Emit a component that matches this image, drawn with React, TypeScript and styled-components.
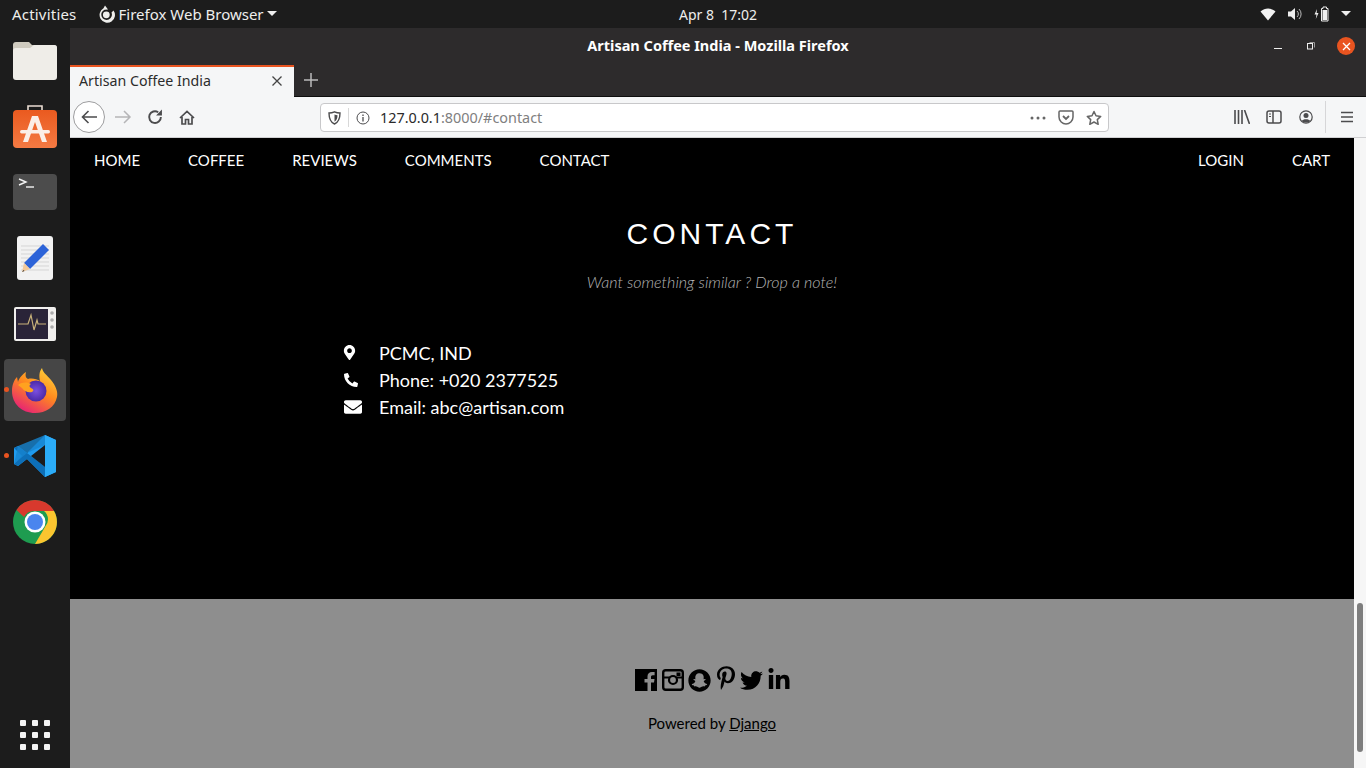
import React from "react";
import styled, { createGlobalStyle } from "styled-components";
import { FaSnapchat, FaPinterestP, FaTwitter, FaLinkedinIn, FaMapMarkerAlt, FaPhoneAlt, FaEnvelope } from "react-icons/fa";

const Global = createGlobalStyle`
  html, body { margin: 0; padding: 0; height: 100%; overflow: hidden; background: #000; }
  #root { height: 768px; }
`;
const Screen = styled.div`
  width: 1366px; height: 768px; display: flex; flex-direction: column; overflow: hidden;
  font-family: "Noto Sans", "Open Sans", sans-serif;
`;
const TopBar = styled.header`
  height: 28px; flex: none; background: #1c1c1c; color: #eeeeec; display: grid;
  grid-template-columns: 1fr auto 1fr; align-items: center; font-size: 15px; padding: 0 15px 0 12px;
`;
const TopLeft = styled.div`display: flex; align-items: center;`;
const Activities = styled.span`letter-spacing: 0.2px;`;
const AppMenu = styled.div`display: flex; align-items: center; gap: 4px; margin-left: 20px;`;
const MenuCaret = styled.svg`display: block; margin-left: -1px;`;
const Clock = styled.div`font-size: 14px; margin-left: 73px;`;
const TopRight = styled.div`display: flex; align-items: center; justify-content: flex-end; gap: 11px;`;
const Body = styled.div`flex: 1; display: flex; min-height: 0;`;
const Dock = styled.nav`
  width: 70px; flex: none; background: #1c1c1c; display: flex; flex-direction: column; align-items: center; padding-top: 1px;
`;
const DockSlot = styled.div<{ $active?: boolean; $running?: boolean }>`
  position: relative; width: 62px; height: 62px; margin-bottom: 4px; border-radius: 4px; display: flex; align-items: center; justify-content: center;
  background: ${(p) => (p.$active ? "#464646" : "transparent")};
  &::before {
    content: ""; display: ${(p) => (p.$running ? "block" : "none")}; position: absolute; left: 0; top: 28px;
    width: 5px; height: 5px; border-radius: 50%; background: #e95420;
  }
`;
const AppGrid = styled.div`
  margin-top: auto; margin-bottom: 18px; display: grid; grid-template-columns: repeat(3, 6px); gap: 6px;
`;
const AppDot = styled.span`width: 6px; height: 6px; border-radius: 1px; background: #f4f4f4;`;
const Window = styled.div`flex: 1; min-width: 0; display: flex; flex-direction: column;`;
const TitleBar = styled.div`
  height: 37px; flex: none; background: #2d2b2c; color: #fff; position: relative; display: flex; align-items: center; justify-content: center;
  font-size: 14.5px; font-weight: 700; padding-bottom: 4px; box-sizing: border-box;
`;
const WindowControls = styled.div`position: absolute; right: 11px; top: 9px; display: flex; align-items: center;`;
const MinButton = styled.svg`display: block; margin-right: 25px;`;
const RestoreButton = styled.svg`display: block; margin-right: 22px;`;
const CloseDot = styled.span`
  width: 18px; height: 18px; border-radius: 50%; background: #e95420; display: flex; align-items: center; justify-content: center;
`;
const TabStrip = styled.div`height: 32px; flex: none; background: #2d2b2c; display: flex; align-items: stretch;`;
const Tab = styled.div`
  width: 224px; background: #f5f6f7; border-top: 2px solid #e95420; box-sizing: border-box; display: flex; align-items: center;
  justify-content: space-between; padding: 0 11px 3px 9px; font-size: 14.2px; color: #2c2c2c;
`;
const TabRest = styled.div`flex: 1; display: flex; border-bottom: 1px solid #0e0e0e;`;
const NewTab = styled.div`width: 34px; display: flex; align-items: center; justify-content: center; padding-bottom: 1px;`;
const Toolbar = styled.div`
  height: 40px; flex: none; background: #f5f6f7; border-bottom: 1px solid #d0d0d2; display: flex; align-items: center; position: relative; box-sizing: content-box;
`;
const BackCircle = styled.div`
  width: 32px; height: 32px; margin: 0 2px 0 3px; border-radius: 50%; background: #fff; border: 1px solid #9d9d9f; box-sizing: border-box;
  display: flex; align-items: center; justify-content: center;
`;
const NavIcon = styled.div`width: 32px; display: flex; align-items: center; justify-content: center;`;
const UrlBar = styled.div`
  position: absolute; left: 250px; top: 6px; width: 789px; height: 29px; box-sizing: border-box; background: #fff; border: 1px solid #c8c8ca; border-radius: 4px;
  display: flex; align-items: center; font-size: 14.4px; padding: 0 6px 0 7px;
`;
const Separator = styled.span`width: 1px; height: 19px; background: #d8d8d8; margin: 0 7px 0 7px;`;
const UrlHost = styled.span`color: #2a2a2a; margin-left: 10px;`;
const UrlRest = styled.span`color: #808080;`;
const UrlActions = styled.div`margin-left: auto; display: flex; align-items: center; gap: 12px;`;
const ToolRight = styled.div`position: absolute; right: 3px; top: 0; height: 40px; display: flex; align-items: center;`;
const ToolBtn = styled.div`width: 32px; display: flex; align-items: center; justify-content: center;`;
const ToolSep = styled.span`width: 1px; height: 32px; background: #d6d6d8; margin: 0 5px 0 3px;`;
const PageRow = styled.div`flex: 1; min-height: 0; display: flex;`;
const Page = styled.main`
  flex: 1; min-width: 0; background: #000; color: #fff; display: flex; flex-direction: column; font-family: Lato, sans-serif;
`;
const SiteNav = styled.nav`height: 43px; flex: none; display: flex; align-items: center; font-size: 15px;`;
const NavLink = styled.a`padding: 0 24px; color: #fff; white-space: nowrap;`;
const NavSpacer = styled.div`flex: 1;`;
const Contact = styled.section`flex: 1; display: flex; flex-direction: column; align-items: center; padding-top: 34px;`;
const Heading = styled.h2`
  margin: 0; font-weight: 400; font-size: 30px; line-height: 38px; letter-spacing: 4px; text-align: center; font-family: "Liberation Sans", Arial, sans-serif;
`;
const Sub = styled.p`margin: 19px 0 0; font-size: 16.1px; line-height: 20px; font-style: italic; font-weight: 300; color: #b4b4b4;`;
const InfoList = styled.ul`
  list-style: none; margin: 47px 0 0; padding: 0 0 0 274px; align-self: stretch; font-size: 18px; display: flex; flex-direction: column;
`;
const InfoRow = styled.li`height: 27px; display: flex; align-items: center;`;
const InfoIcon = styled.span`width: 35px; display: flex; align-items: center;`;
const Marker = styled(FaMapMarkerAlt)`margin-left: -2px; margin-right: 2px;`;
const Footer = styled.footer`
  height: 169px; flex: none; background: #8e8e8e; color: #000; display: flex; flex-direction: column; align-items: center; padding-top: 67px; box-sizing: border-box;
`;
const Socials = styled.div`display: flex; align-items: center; height: 28px; padding-left: 2px;`;
const SocialItem = styled.span<{ $gap?: number; $lift?: number }>`
  display: flex; margin-left: ${(p) => p.$gap ?? 0}px; margin-top: ${(p) => -(p.$lift ?? 0)}px;
`;
const PoweredBy = styled.p`margin: 19px 0 0; font-size: 15px; line-height: 20px; a { color: #000; text-decoration: underline; }`;
const ScrollTrack = styled.div`width: 12px; flex: none; background: #f6f6f6; display: flex; flex-direction: column; justify-content: flex-end; align-items: center; padding-bottom: 16px; box-sizing: border-box;`;
const ScrollThumb = styled.div`width: 6px; height: 149px; background: #7e7e7e; border-radius: 3px;`;

const Ico = styled.svg`display: block; flex: none;`;
const grey = "#4c4c4e";

export default function App() {
  return (
    <Screen>
      <Global />
      <TopBar>
        <TopLeft>
          <Activities>Activities</Activities>
          <AppMenu>
            <Ico width="18" height="18" viewBox="0 0 18 18">
              <path d="M8 0.500 L6.500 3.300 A7.700 7.700 0 1 0 16.500 5.500 L14.500 7.500 A5.300 5.300 0 1 1 7.500 4.700 L11 4.500 Z" fill="#eeeeec" />
              <circle cx="9.300" cy="9.800" r="3.400" fill="#eeeeec" />
            </Ico>
            <span>Firefox Web Browser</span>
            <MenuCaret width="10" height="6" viewBox="0 0 10 6"><path d="M0 0h10L5 5z" fill="#eee" /></MenuCaret>
          </AppMenu>
        </TopLeft>
        <Clock>Apr 8&nbsp;&nbsp;17:02</Clock>
        <TopRight>
          <Ico width="16" height="13" viewBox="0 0 16 13"><path d="M0.500 3.500C5 -0.500 11 -0.500 15.500 3.500L8 12.500Z" fill="#f2f2f2" /></Ico>
          <Ico width="16" height="14" viewBox="0 0 16 14"><path d="M1 4.500h3L8 1v12L4 9.500H1z" fill="#eee" /><path d="M10 4a4 4 0 0 1 0 6M12 2a7 7 0 0 1 0 10" stroke="#bbb" strokeWidth="1" fill="none" /></Ico>
          <Ico width="16" height="16" viewBox="0 0 16 16"><path d="M3 3 0.500 8.500H2.500L1.800 13 4.500 7H2.600z" fill="#eee" /><path d="M7.500 2.500h1.500V1h3.500v1.500H14V15H7.500z" fill="none" stroke="#eee" strokeWidth="1" /><rect x="8.500" y="4" width="4.500" height="10" fill="#eee" /></Ico>
          <Ico width="10" height="6" viewBox="0 0 10 6"><path d="M0 0h10L5 5z" fill="#eee" /></Ico>
        </TopRight>
      </TopBar>
      <Body>
        <Dock>
          <DockSlot>
            <Ico width="46" height="42" viewBox="0 0 46 42">
              <path d="M1 6a3 3 0 0 1 3-3h13l3 3h22a3 3 0 0 1 3 3v6H1z" fill="#cfcbbf" />
              <path d="M1 12q0-3 3-3h14l4-3h20q3 0 3 3v29q0 3-3 3H4q-3 0-3-3z" fill="#efede8" />
            </Ico>
          </DockSlot>
          <DockSlot>
            <Ico width="46" height="44" viewBox="0 0 46 44">
              <defs><linearGradient id="o" x1="0" y1="0" x2="0" y2="1"><stop offset="0" stopColor="#ea5a1f" /><stop offset="1" stopColor="#f47a43" /></linearGradient></defs>
              <path d="M16 7V2h14v5" fill="none" stroke="#eadcd2" strokeWidth="1.600" />
              <rect x="1" y="6" width="44" height="38" rx="4" fill="url(#o)" />
              <path d="M20 12h6l9 26h-5l-7-20-7 20h-5z" fill="#fbeee6" />
              <rect x="8" y="26" width="30" height="3.500" rx="1.700" fill="#fbeee6" />
            </Ico>
          </DockSlot>
          <DockSlot>
            <Ico width="44" height="36" viewBox="0 0 44 36">
              <rect width="44" height="36" rx="4" fill="#4c4c4c" />
              <path d="M6 5l7 3-7 3" stroke="#f4f4f4" strokeWidth="1.400" fill="none" />
              <path d="M13 13h8" stroke="#f4f4f4" strokeWidth="1.400" />
            </Ico>
          </DockSlot>
          <DockSlot>
            <Ico width="38" height="46" viewBox="0 0 38 46">
              <rect x="1" y="1" width="36" height="44" rx="3" fill="#f2f2f2" />
              <path d="M5 11h28M5 15h28M5 19h28M5 23h28M5 27h28M5 31h28M5 35h28" stroke="#d5d5d5" strokeWidth="1" />
              <path d="M27 9l6 6-19 19-6-6z" fill="#2c63d8" />
              <path d="M8 28l6 6-8 3z" fill="#f0c89a" />
              <path d="M7.500 35l-1.500 2 2.500-1z" fill="#333" />
            </Ico>
          </DockSlot>
          <DockSlot>
            <Ico width="42" height="34" viewBox="0 0 42 34">
              <rect width="42" height="34" rx="2" fill="#f0efed" />
              <rect x="2" y="2" width="32" height="30" fill="#2a2438" />
              <path d="M4 17h10l3-9 3 15 3-10 1 4h8" stroke="#c9b27a" strokeWidth="1.200" fill="none" />
              <circle cx="38" cy="6" r="1.800" fill="#aaa" /><circle cx="38" cy="13" r="1.800" fill="#aaa" /><circle cx="38" cy="20" r="1.800" fill="#aaa" />
            </Ico>
          </DockSlot>
          <DockSlot $active $running>
            <Ico width="46" height="46" viewBox="0 0 46 46">
              <defs>
                <linearGradient id="ff" x1="0.800" y1="0" x2="0.200" y2="1"><stop offset="0" stopColor="#ffd43a" /><stop offset="0.450" stopColor="#ff8a1e" /><stop offset="1" stopColor="#e5197c" /></linearGradient>
                <radialGradient id="fg"><stop offset="0" stopColor="#7b4fe0" /><stop offset="1" stopColor="#4a2aa8" /></radialGradient>
              </defs>
              <path d="M30 1c1 5 5 7 9 12 5 6 7 12 6 17-2 10-11 16-22 16C10 46 0 37 0 24 0 18 2 13 5 10l1 5c1-4 5-8 8-10-1 4 0 6 2 7 4-1 9 0 12 2-1-5-1-9 2-13z" fill="url(#ff)" />
              <circle cx="24" cy="24" r="10.500" fill="url(#fg)" />
              <path d="M6 18c4-3 9-3 13-1-2 1-2 3 0 4 3 1 3 3 1 4-4 1-8-1-10-4z" fill="#ffa21f" />
            </Ico>
          </DockSlot>
          <DockSlot $running>
            <Ico width="44" height="44" viewBox="0 0 44 44">
              <path d="M32 1 14 19 5 12 1 14v16l4 2 9-7 18 18 11-5V6z" fill="#1f9cf0" />
              <path d="M32 1v42l11-5V6z" fill="#2bacf8" />
              <path d="M1 14l4-2 27 21v10L14 25 5 32l-4-2 8-8z" fill="#0d6fb8" />
              <path d="M5 12l27-11v10L14 19 1 30z" fill="#1785cf" opacity="0.800" />
              <path d="M32 11 18 22l14 11z" fill="#1c1c1c" />
            </Ico>
          </DockSlot>
          <DockSlot>
            <Ico width="44" height="44" viewBox="0 0 44 44">
              <circle cx="22" cy="22" r="22" fill="#1e9c50" />
              <path d="M22 0a22 22 0 0 1 19 11H22a11 11 0 0 0-11 6L3.500 10A22 22 0 0 1 22 0z" fill="#d8392d" />
              <path d="M41 11a22 22 0 0 1-19 33l10-17a11 11 0 0 0-1-16z" fill="#fbc52f" />
              <circle cx="22" cy="22" r="10.500" fill="#fff" />
              <circle cx="22" cy="22" r="8" fill="#4a85ee" />
            </Ico>
          </DockSlot>
          <AppGrid>{Array.from({ length: 9 }, (_, i) => <AppDot key={i} />)}</AppGrid>
        </Dock>
        <Window>
          <TitleBar>
            Artisan Coffee India - Mozilla Firefox
            <WindowControls>
              <MinButton width="8" height="10" viewBox="0 0 8 10"><path d="M0 7.500h8" stroke="#eee" /></MinButton>
              <RestoreButton width="8" height="9" viewBox="0 0 8 9"><rect x="0.500" y="1.500" width="5" height="5.500" fill="none" stroke="#eee" /><path d="M2.500 0.500h5v5" fill="none" stroke="#999" /></RestoreButton>
              <CloseDot>
                <Ico width="9" height="9" viewBox="0 0 9 9"><path d="M1 1l7 7M8 1 1 8" stroke="#fff" strokeWidth="1.300" /></Ico>
              </CloseDot>
            </WindowControls>
          </TitleBar>
          <TabStrip>
            <Tab>
              Artisan Coffee India
              <Ico width="12" height="12" viewBox="0 0 12 12"><path d="M1.500 1.500l9 9M10.500 1.500l-9 9" stroke="#444" strokeWidth="1.300" /></Ico>
            </Tab>
            <TabRest>
              <NewTab><Ico width="14" height="14" viewBox="0 0 14 14"><path d="M7 0v14M0 7h14" stroke="#bbb" strokeWidth="1.500" /></Ico></NewTab>
            </TabRest>
          </TabStrip>
          <Toolbar>
            <BackCircle>
              <Ico width="16" height="14" viewBox="0 0 16 14"><path d="M7.500 1 1.500 7l6 6M1.500 7H16" stroke={grey} strokeWidth="1.600" fill="none" /></Ico>
            </BackCircle>
            <NavIcon><Ico width="17" height="14" viewBox="0 0 17 14"><path d="M9 1l6 6-6 6M15 7H0" stroke="#b5b5b7" strokeWidth="1.500" fill="none" /></Ico></NavIcon>
            <NavIcon><Ico width="16" height="16" viewBox="0 0 15 15"><path d="M13 7.500A5.500 5.500 0 1 1 10.500 3" stroke={grey} strokeWidth="1.800" fill="none" /><path d="M14 0.500v5.500h-5.500z" fill={grey} /></Ico></NavIcon>
            <NavIcon><Ico width="16" height="15" viewBox="0 0 16 15"><path d="M1 8 8 1.500 15 8M3 7v7h3.500V9.500h3V14H13V7" stroke={grey} strokeWidth="1.700" fill="none" /></Ico></NavIcon>
            <UrlBar>
              <Ico width="13" height="14" viewBox="0 0 13 14"><path d="M1 2c2 0 4-.5 5.500-1.200C8 1.500 10 2 12 2c0 5-1 9-5.500 11C2 11 1 7 1 2z" fill="none" stroke={grey} strokeWidth="1.400" /><path d="M6.500 3.500c1 .5 2 .7 3 .8 0 3-.6 5-3 6.500z" fill={grey} /></Ico>
              <Separator />
              <Ico width="14" height="14" viewBox="0 0 14 14"><circle cx="7" cy="7" r="6" fill="none" stroke={grey} /><path d="M7 6v4.500M7 3.500v1.500" stroke={grey} strokeWidth="1.300" /></Ico>
              <UrlHost>127.0.0.1</UrlHost><UrlRest>:8000/#contact</UrlRest>
              <UrlActions>
                <Ico width="16" height="4" viewBox="0 0 16 4"><circle cx="2" cy="2" r="1.500" fill="#666" /><circle cx="8" cy="2" r="1.500" fill="#666" /><circle cx="14" cy="2" r="1.500" fill="#666" /></Ico>
                <Ico width="16" height="15" viewBox="0 0 16 15"><path d="M2 1h12a1 1 0 0 1 1 1v5c0 4-3.500 7-7 7s-7-3-7-7V2a1 1 0 0 1 1-1z" fill="none" stroke="#666" strokeWidth="1.500" /><path d="M5 6l3 3 3-3" fill="none" stroke="#666" strokeWidth="1.800" /></Ico>
                <Ico width="16" height="16" viewBox="0 0 16 16"><path d="M8 1.500l2 4.300 4.700.6-3.400 3.200.9 4.700L8 12l-4.200 2.300.9-4.700L1.300 6.400 6 5.800z" fill="none" stroke="#666" strokeWidth="1.500" strokeLinejoin="round" /></Ico>
              </UrlActions>
            </UrlBar>
            <ToolRight>
              <ToolBtn><Ico width="16" height="14" viewBox="0 0 16 14"><path d="M1 0v14M4.500 0v14M8 0v14M10.500 0l5 14" stroke={grey} strokeWidth="1.600" /></Ico></ToolBtn>
              <ToolBtn><Ico width="16" height="14" viewBox="0 0 16 14"><rect x="1" y="1" width="14" height="12" rx="2" fill="none" stroke={grey} strokeWidth="1.500" /><path d="M7 1v12" stroke={grey} strokeWidth="1.500" /><path d="M3 4h2M3 6.500h2" stroke={grey} /></Ico></ToolBtn>
              <ToolBtn><Ico width="14" height="14" viewBox="0 0 14 14"><circle cx="7" cy="7" r="6.200" fill="none" stroke={grey} strokeWidth="1.200" /><circle cx="7" cy="5.500" r="2.500" fill={grey} /><path d="M2.800 11c1-2.500 7.400-2.500 8.400 0-2 2-6.400 2-8.400 0z" fill={grey} /></Ico></ToolBtn>
              <ToolSep />
              <ToolBtn><Ico width="12" height="12" viewBox="0 0 12 12"><path d="M0 1.500h12M0 6h12M0 10.500h12" stroke={grey} strokeWidth="1.600" /></Ico></ToolBtn>
            </ToolRight>
          </Toolbar>
          <PageRow>
            <Page>
              <SiteNav>
                <NavLink>HOME</NavLink>
                <NavLink>COFFEE</NavLink>
                <NavLink>REVIEWS</NavLink>
                <NavLink>COMMENTS</NavLink>
                <NavLink>CONTACT</NavLink>
                <NavSpacer />
                <NavLink>LOGIN</NavLink>
                <NavLink>CART</NavLink>
              </SiteNav>
              <Contact>
                <Heading>CONTACT</Heading>
                <Sub>Want something similar ? Drop a note!</Sub>
                <InfoList>
                  <InfoRow><InfoIcon><Marker size={15} /></InfoIcon>PCMC, IND</InfoRow>
                  <InfoRow><InfoIcon><FaPhoneAlt size={14} /></InfoIcon>Phone: +020 2377525</InfoRow>
                  <InfoRow><InfoIcon><FaEnvelope size={18} /></InfoIcon>Email: abc@artisan.com</InfoRow>
                </InfoList>
              </Contact>
              <Footer>
                <Socials>
                  <SocialItem><Ico width="22" height="22" viewBox="0 0 22 22"><path d="M0 0h22v22h-6v-8.500h3l.5-3.500H16V8c0-1 .4-1.700 1.800-1.700H19.600V3.100C19.200 3 18.200 3 17 3c-2.700 0-4.500 1.600-4.500 4.600V10H9.500v3.500h3V22H0z" fill="#000" /></Ico></SocialItem>
                  <SocialItem $gap={5}><Ico width="22" height="22" viewBox="0 0 22 22"><rect x="1.200" y="1.200" width="19.600" height="19.600" rx="2.500" fill="none" stroke="#000" strokeWidth="2.400" /><path d="M1 8.500h20" stroke="#000" strokeWidth="2" /><circle cx="11" cy="11" r="4" fill="#8e8e8e" stroke="#000" strokeWidth="2.200" /><rect x="14.500" y="3.500" width="4" height="3.500" fill="#000" /></Ico></SocialItem>
                  <SocialItem $gap={4}><FaSnapchat size={23} /></SocialItem>
                  <SocialItem $gap={3} $lift={4}><FaPinterestP size={24} /></SocialItem>
                  <SocialItem $gap={2}><FaTwitter size={23} /></SocialItem>
                  <SocialItem $gap={4}><FaLinkedinIn size={24} /></SocialItem>
                </Socials>
                <PoweredBy>Powered by <a>Django</a></PoweredBy>
              </Footer>
            </Page>
            <ScrollTrack><ScrollThumb /></ScrollTrack>
          </PageRow>
        </Window>
      </Body>
    </Screen>
  );
}
